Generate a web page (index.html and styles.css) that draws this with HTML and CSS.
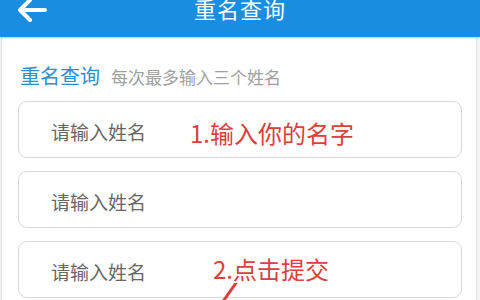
FILE: index.html
```html
<!DOCTYPE html>
<html lang="zh">
<head>
<meta charset="utf-8">
<title>重名查询</title>
<link rel="stylesheet" href="styles.css">
</head>
<body>
<header class="topbar">
  <svg class="back" width="32" height="26" viewBox="0 0 32 26">
    <path d="M4 11 H29 M4 11 L14 1 M4 11 L14 21" fill="none" stroke="#fff" stroke-width="4" stroke-linecap="round" stroke-linejoin="round"/>
  </svg>
  <h1 class="title">重名查询</h1>
</header>
<main class="card">
  <div class="section-head">
    <span class="section-title">重名查询</span>
    <span class="section-sub">每次最多输入三个姓名</span>
  </div>
  <div class="fields">
    <div class="field">
      <span class="placeholder">请输入姓名</span>
      <span class="note note-1">1.输入你的名字</span>
    </div>
    <div class="field">
      <span class="placeholder">请输入姓名</span>
    </div>
    <div class="field">
      <span class="placeholder">请输入姓名</span>
      <span class="note note-2">2.点击提交</span>
      <svg class="pointer" width="24" height="24" viewBox="0 0 24 24">
        <path d="M18 0 L4 20" fill="none" stroke="#d9403e" stroke-width="3" stroke-linecap="round"/>
      </svg>
    </div>
  </div>
</main>
</body>
</html>
```

FILE: styles.css
```css
* { box-sizing: border-box; }
html, body {
  margin: 0;
  padding: 0;
}
body {
  width: 480px;
  height: 300px;
  overflow: hidden;
  background: #f4f4f4;
  font-family: "Noto Sans CJK SC", "Noto Sans", sans-serif;
}
.topbar {
  position: relative;
  height: 37px;
  background: #1b8de0;
  display: flex;
  justify-content: center;
  align-items: flex-start;
  box-shadow: 0 1px 2px rgba(120, 190, 240, 0.7);
  z-index: 1;
}
.back {
  position: absolute;
  left: 16px;
  top: -1px;
}
.title {
  margin: 0;
  margin-top: -4px;
  font-size: 22px;
  line-height: 24px;
  font-weight: normal;
  color: #fff;
  letter-spacing: 1px;
}
.card {
  margin: 0 3px 0 1px;
  height: 263px;
  background: #fff;
  border-left: 1px solid #e2e2e2;
  border-right: 1px solid #e2e2e2;
  padding: 27px 14px 0 16px;
}
.section-head {
  display: flex;
  align-items: center;
  height: 24px;
  padding-left: 2px;
  margin-bottom: 13px;
}
.section-title {
  font-size: 20px;
  line-height: 24px;
  color: #2b8fd2;
  margin-right: 11px;
}
.section-sub {
  font-size: 17px;
  line-height: 24px;
  color: #a0a0a0;
  margin-top: 2px;
}
.fields {
  display: flex;
  flex-direction: column;
  gap: 13px;
}
.field {
  position: relative;
  height: 57px;
  border: 1px solid #d8d8d8;
  border-radius: 9px;
  display: flex;
  align-items: center;
  padding: 3px 0 0 32px;
}
.placeholder {
  font-size: 19px;
  color: #666;
}
.note {
  position: absolute;
  font-size: 24px;
  line-height: 28px;
  color: #d9403e;
}
.note-1 {
  left: 171px;
  top: 17px;
}
.note-2 {
  left: 194px;
  top: 13px;
}
.pointer {
  position: absolute;
  left: 199px;
  top: 41px;
}
```
